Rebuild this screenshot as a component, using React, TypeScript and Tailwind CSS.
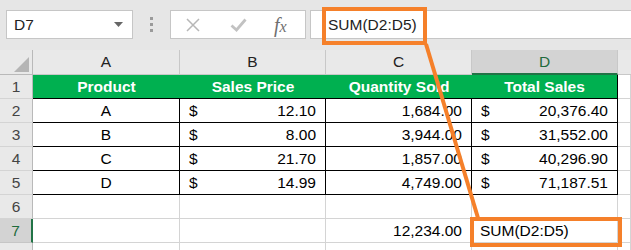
import type { ReactNode } from 'react'

type Cell = { text?: string; dollar?: boolean; align?: 'left' | 'center' | 'right' }

const data: Cell[][] = [
  [{ text: 'A', align: 'center' }, { dollar: true, text: '12.10' }, { text: '1,684.00', align: 'right' }, { dollar: true, text: '20,376.40' }],
  [{ text: 'B', align: 'center' }, { dollar: true, text: '8.00' }, { text: '3,944.00', align: 'right' }, { dollar: true, text: '31,552.00' }],
  [{ text: 'C', align: 'center' }, { dollar: true, text: '21.70' }, { text: '1,857.00', align: 'right' }, { dollar: true, text: '40,296.90' }],
  [{ text: 'D', align: 'center' }, { dollar: true, text: '14.99' }, { text: '4,749.00', align: 'right' }, { dollar: true, text: '71,187.51' }],
]

const headers = ['Product', 'Sales Price', 'Quantity Sold', 'Total Sales']

function RowHead({ n, active }: { n?: number; active?: boolean }) {
  return (
    <div
      className={
        active
          ? 'h-[24px] flex items-center justify-center bg-[#d3d3d3] text-[#1e6b3c] border-b border-[#c6c6c6] border-r-2 border-r-[#217346]'
          : 'h-[24px] flex items-center justify-center bg-[#e9e9e9] text-[#444] border-b border-[#d4d4d4] border-r border-r-[#b9b9b9]'
      }
    >
      {n}
    </div>
  )
}

function GridCell({ children, className = '' }: { children?: ReactNode; className?: string }) {
  return <div className={`h-[24px] flex items-center border-r border-b border-[#d4d4d4] ${className}`}>{children}</div>
}

function DataCell({ cell }: { cell: Cell }) {
  if (cell.dollar) {
    return (
      <div className="h-[24px] flex items-center justify-between pl-[9px] pr-[9px] border-r border-b border-black">
        <span>$</span>
        <span>{cell.text}</span>
      </div>
    )
  }
  const align = cell.align === 'center' ? 'justify-center' : cell.align === 'right' ? 'justify-end pr-[9px]' : 'pl-[8px]'
  return <div className={`h-[24px] flex items-center border-r border-b border-black ${align}`}>{cell.text}</div>
}

export default function App() {
  return (
    <div className="relative w-[631px] h-[250px] overflow-hidden bg-white font-['Liberation_Sans',Arial,sans-serif] text-[15.5px] text-black">
      {/* toolbar */}
      <div className="h-[50px] bg-[#e6e6e6] flex items-start pt-[10px] pl-[6px]">
        <div className="w-[127px] h-[29px] bg-white border border-[#c6c6c6] flex items-center justify-between pl-[7px] pr-[9px] text-[#222]">
          <span>D7</span>
          <svg width="9" height="5" viewBox="0 0 9 5">
            <path d="M0 0 H9 L4.5 5 Z" fill="#666" />
          </svg>
        </div>
        <div className="w-[37px] h-[29px] flex flex-col items-center justify-center gap-[3px]">
          <span className="w-[3px] h-[3px] bg-[#9a9a9a]" />
          <span className="w-[3px] h-[3px] bg-[#9a9a9a]" />
          <span className="w-[3px] h-[3px] bg-[#9a9a9a]" />
        </div>
        <div className="w-[136px] h-[29px] bg-white border border-[#c6c6c6] flex items-center">
          <svg className="ml-[15px]" width="14" height="14" viewBox="0 0 14 14">
            <path d="M1 1 L13 13 M13 1 L1 13" stroke="#b7b7b7" strokeWidth="1.5" />
          </svg>
          <svg className="ml-[30px]" width="17" height="14" viewBox="0 0 17 14">
            <path d="M1.5 7.5 L6.5 12 L15.5 1.5" stroke="#c2c2c2" strokeWidth="2.8" fill="none" />
          </svg>
          <span className="ml-[27px] font-['Liberation_Serif',serif] italic text-[20px] leading-none text-[#6f6f6f]">
            f<span className="text-[16px]">x</span>
          </span>
        </div>
        <div className="ml-[4px] flex-1 h-[29px] bg-white border border-[#c6c6c6] border-r-0 flex items-center pl-[17px] text-[#222]">
          SUM(D2:D5)
        </div>
      </div>

      {/* sheet */}
      <div className="grid grid-cols-[33px_147px_146px_146px_146px_1fr]">
        <div className="h-[25px] bg-[#e9e9e9] border-r border-b border-[#b9b9b9] flex items-end justify-end pr-[3px] pb-[2px]">
          <svg width="15" height="15" viewBox="0 0 15 15">
            <path d="M15 0 V15 H0 Z" fill="#b5b5b5" />
          </svg>
        </div>
        {['A', 'B', 'C'].map((c) => (
          <div key={c} className="h-[25px] bg-[#e9e9e9] border-r border-b border-[#c8c8c8] flex items-center justify-center text-[#222]">
            {c}
          </div>
        ))}
        <div className="h-[25px] bg-[#d3d3d3] border-r border-[#c8c8c8] border-b-2 border-b-[#217346] flex items-center justify-center text-[#1e6b3c]">
          D
        </div>
        <div className="h-[25px] bg-[#e9e9e9] border-b border-[#c8c8c8]" />

        <RowHead n={1} />
        {headers.map((h, i) => (
          <div
            key={h}
            className={`h-[24px] bg-[#00b050] text-white font-bold flex items-center justify-center border-b border-black ${i === 3 ? 'border-r border-r-black' : ''}`}
          >
            {h}
          </div>
        ))}
        <GridCell />

        {data.map((row, r) => (
          <div key={r} className="contents">
            <RowHead n={r + 2} />
            {row.map((c, i) => (
              <DataCell key={i} cell={c} />
            ))}
            <GridCell />
          </div>
        ))}

        <RowHead n={6} />
        <GridCell />
        <GridCell />
        <GridCell />
        <GridCell />
        <GridCell />

        <RowHead n={7} active />
        <GridCell />
        <GridCell />
        <GridCell className="justify-end pr-[9px]">12,234.00</GridCell>
        <GridCell className="pl-[8px]">SUM(D2:D5)</GridCell>
        <GridCell />

        {/* row 8 is only a sliver at the bottom edge */}
        <RowHead />
        <GridCell />
        <GridCell />
        <GridCell />
        <GridCell />
        <GridCell />
      </div>

      {/* callouts */}
      <div className="absolute left-[322px] top-[7px] w-[105px] h-[38px] border-[4px] border-[#f5802a]" />
      <div className="absolute left-[470px] top-[217px] w-[152px] h-[30px] border-[4px] border-[#f5802a]" />
      <svg className="absolute left-0 top-0 pointer-events-none" width="631" height="250">
        <line x1="426" y1="44" x2="478" y2="218" stroke="#f5802a" strokeWidth="4" />
      </svg>
    </div>
  )
}
